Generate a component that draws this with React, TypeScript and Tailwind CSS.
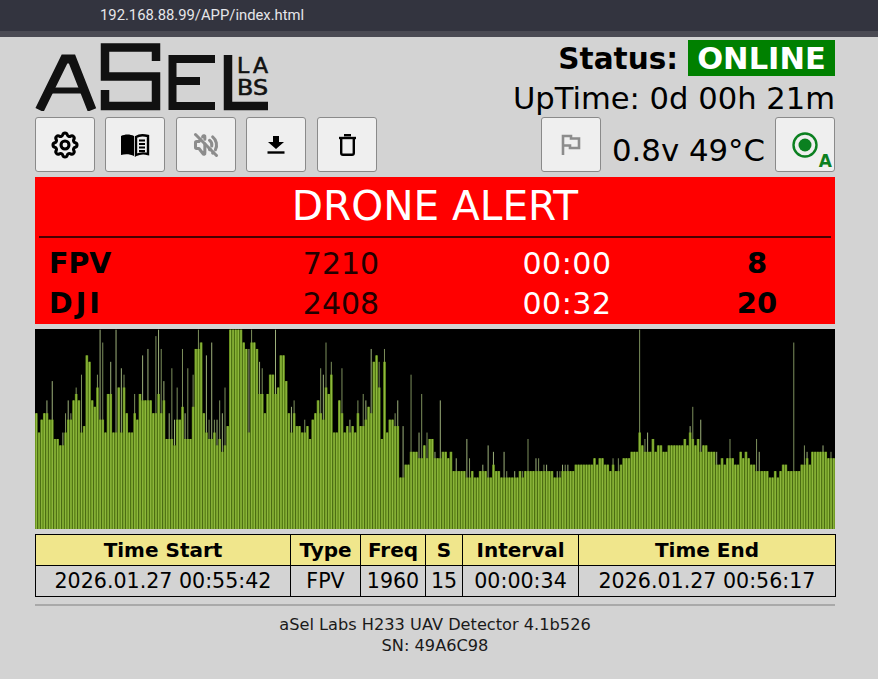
import { TbSettings, TbVolumeOff } from "react-icons/tb";

type B = number | [number, number];
const BARS: B[] = [
  18,15,17,18,[18,20],17,[17,23],14,14,13,[13,15],[15,18],[17,20],[17,18],20,[21,22],20,[15,24],16,27,26,20,19,[22,24],[17,31],[17,29],15,21,[21,26],15,[15,31],22,[15,25],[22,24],18,15,15,[18,21],17,21,[20,27],20,[20,28],20,18,[18,30],[21,31],[18,28],[20,23],14,[14,18],[14,25],[13,17],[17,22],17,[19,28],[14,18],[14,25],14,[19,24],28,[28,31],29,18,[15,27],[14,17],[14,29],[15,17],[13,17],[14,20],[12,18],[13,22],16,31,31,31,31,31,29,28,[15,28],[29,31],29,28,[21,26],[21,25],18,21,24,24,[21,31],22,27,27,23,18,[15,19],[18,20],16,16,
  15,[15,17],16,14,17,18,20,[18,25],[17,24],[22,29],21,[24,26],15,15,20,[18,25],15,16,[15,17],16,15,[18,20],16,[16,21],[17,20],19,[18,28],26,27,[22,26],14,[26,28],15,17,17,[16,18],[16,20],8,[8,16],10,10,[12,24],12,12,[11,15],[11,21],13,[11,15],14,14,[11,12],11,[11,20],12,12,11,12,9,[9,11],9,9,9,[8,14],[8,11],9,8,8,9,[9,10],9,[8,13],8,[10,12],9,9,8,[8,12],[8,9],8,8,[8,9],8,9,[8,9],9,[9,14],9,9,[9,11],[9,11],9,[9,10],[9,10],9,9,8,[8,9],[8,9],[9,10],[9,10],[9,10],9,
  9,10,10,10,10,10,10,10,11,10,11,11,10,10,9,[10,11],9,[9,11],10,11,11,11,12,12,12,[15,31],13,[12,14],[12,15],12,14,12,13,13,12,12,13,13,13,13,13,13,14,13,[15,16],[14,19],13,14,[12,17],13,13,12,12,12,[10,12],10,11,10,11,[11,14],11,10,10,12,11,12,11,10,10,[9,14],[9,12],9,9,9,8,8,9,8,9,10,10,9,9,[9,29],9,9,10,[10,13],[11,12],10,12,12,12,12,[12,13],12,11,[11,12],11,
];

const STEP = 6.43;
const PITCH = 800 / BARS.length;

function Spectrum() {
  return (
    <svg viewBox="0 0 800 200" width="800" height="200" preserveAspectRatio="none" className="block bg-black">
      {BARS.map((b, i) => {
        const fill = Array.isArray(b) ? b[0] : b;
        const spike = Array.isArray(b) ? b[1] : 0;
        const x = i * PITCH;
        const h = Math.min(200, fill * STEP);
        const sh = Math.min(200, spike * STEP);
        return (
          <g key={i}>
            {spike > 0 && <rect x={x + 0.8} y={200 - sh} width={1} height={sh} fill={i % 2 ? "#7c8f5c" : "#9cb07a"} />}
            <rect x={x} y={200 - h} width={PITCH} height={h} fill="#648f1a" />
            <rect x={x + 0.8} y={200 - h} width={1.2} height={h} fill="#8fb83f" />
          </g>
        );
      })}
    </svg>
  );
}

function Logo() {
  return (
    <svg width="234" height="68" viewBox="0 0 234 68" className="block" role="img" aria-label="aSel Labs logo">
      <g fill="none" stroke="#111" strokeLinejoin="miter">
        <path d="M4.5 67 L29.5 16 L37 16 L57 67" strokeWidth="9" />
        <path d="M16 47.5 H47" strokeWidth="6" />
        <path d="M121 18 V4.5 H70 V33.5 H121 V63 H70 V47" strokeWidth="8.5" />
        <path d="M180 16 H137.5 V63 H180" strokeWidth="8" />
        <path d="M137 38 H165" strokeWidth="8" />
        <path d="M193 12 V63 H233" strokeWidth="8.5" />
      </g>
      <text x="202" y="30" fill="#111" stroke="#111" strokeWidth="0.6" fontFamily="'DejaVu Sans', sans-serif" fontSize="22" textLength="31" lengthAdjust="spacing">LA</text>
      <text x="202" y="52" fill="#111" stroke="#111" strokeWidth="0.6" fontFamily="'DejaVu Sans', sans-serif" fontSize="22" textLength="31" lengthAdjust="spacingAndGlyphs">BS</text>
    </svg>
  );
}

function IconBtn({ children }: { children: React.ReactNode }) {
  return (
    <button className="relative flex h-[55px] w-[60px] shrink-0 items-center justify-center rounded-[3px] border border-[#8a8a8a] bg-[#efefef]">
      {children}
    </button>
  );
}

const Book = () => (
  <svg width="30" height="24" viewBox="0 0 30 24">
    <path d="M1 3 C5 1 10 1 14 3 V23 C10 21 5 21 1 22 Z" fill="#000" />
    <path d="M16 4 C19 2 24 2 28 3 V21 C24 20 20 20 16 22 Z" fill="none" stroke="#000" strokeWidth="2.4" />
    <path d="M19 7.5 H25 M19 11 H25 M19 14.5 H25 M19 18 H25" stroke="#000" strokeWidth="1.8" />
  </svg>
);

const Download = () => (
  <svg width="18" height="18" viewBox="0 0 18 18">
    <path d="M6 0 H12 V6 H17 L9 13 L1 6 H6 Z" fill="#000" />
    <path d="M0.5 16.5 H17.5" stroke="#000" strokeWidth="2.4" />
  </svg>
);

const Trash = () => (
  <svg width="19" height="22" viewBox="0 0 19 22">
    <path d="M1 4 H18" stroke="#000" strokeWidth="2.4" />
    <path d="M6 1.2 H13" stroke="#000" strokeWidth="2.4" />
    <path d="M3.2 4 V19 Q3.2 20.8 5 20.8 H14 Q15.8 20.8 15.8 19 V4" fill="none" stroke="#000" strokeWidth="2.4" />
  </svg>
);

const Flag = () => (
  <svg width="20" height="22" viewBox="0 0 20 22">
    <path d="M2 21 V2 H10 V4.5 H18 V14 H9 V11.5 H2" fill="none" stroke="#8c8c8c" strokeWidth="2.6" />
  </svg>
);

const Radio = () => (
  <svg width="26" height="26" viewBox="0 0 26 26">
    <circle cx="13" cy="13" r="11.5" fill="none" stroke="#0b8020" strokeWidth="2.4" />
    <circle cx="13" cy="13" r="6.5" fill="#0b8020" />
  </svg>
);

export default function App() {
  return (
    <div className="min-h-screen bg-[#d3d3d3] font-['DejaVu_Sans',sans-serif] text-black">
      <div className="h-[31px] bg-[#33343f] pl-[100px] pt-[6px] font-['Roboto',sans-serif] text-[14.8px] leading-[18px] text-[#e6e6ea]">
        192.168.88.99/APP/index.html
      </div>
      <div className="h-[6px] bg-[#4a4a53]" />
      <div className="mx-[35px] w-[800px]">
        <div className="flex h-[140px] justify-between">
          <div className="flex flex-col">
            <div className="mt-[6px]">
              <Logo />
            </div>
            <div className="mt-[6px] flex">
              <IconBtn><TbSettings size={32} color="#000" strokeWidth={2.3} /></IconBtn>
              <div className="ml-[10px]"><IconBtn><Book /></IconBtn></div>
              <div className="ml-[11px]"><IconBtn><TbVolumeOff size={28} color="#8c8c8c" strokeWidth={2.6} /></IconBtn></div>
              <div className="ml-[10px]"><IconBtn><Download /></IconBtn></div>
              <div className="ml-[11px]"><IconBtn><Trash /></IconBtn></div>
            </div>
          </div>
          <div className="flex flex-col items-end pt-[3px]">
            <div className="flex h-[36px] items-center">
              <span className="pt-[4px] text-[29.5px] font-bold leading-none">Status:</span>
              <span className="ml-[10px] flex h-[36px] w-[147px] items-center justify-center bg-[#008000] pt-[3px] text-[30.5px] font-bold leading-none text-white">ONLINE</span>
            </div>
            <div className="mt-[4px] h-[37px] text-[30.6px] leading-[37px] whitespace-nowrap">UpTime: 0d 00h 21m</div>
            <div className="flex items-center">
              <IconBtn><Flag /></IconBtn>
              <span className="ml-[11px] mr-[10px] whitespace-nowrap pt-[10px] text-[30.8px] leading-[40px]">0.8v 49°C</span>
              <IconBtn>
                <Radio />
                <span className="absolute bottom-[1px] right-[2px] text-[17px] font-bold leading-none text-[#0b8020]">A</span>
              </IconBtn>
            </div>
          </div>
        </div>

        <div className="h-[147px] bg-[#ff0000]">
          <div className="h-[59px] text-center text-[40.6px] leading-[58px] text-white">DRONE ALERT</div>
          <div className="mx-[4px] h-[2px] bg-[#4a0000]" />
          <div className="mt-[6px] grid grid-cols-[192px_228px_224px_156px] text-[30px] leading-[40px]">
            <span className="pl-[14px] text-[28.5px] font-bold">FPV</span>
            <span className="text-center text-[#220000]">7210</span>
            <span className="text-center tracking-[0.5px] text-white">00:00</span>
            <span className="text-center text-[29px] leading-[38px] font-bold">8</span>
            <span className="pl-[14px] text-[28.5px] font-bold tracking-[3px]">DJI</span>
            <span className="text-center text-[#220000]">2408</span>
            <span className="text-center tracking-[0.5px] text-white">00:32</span>
            <span className="text-center text-[29px] leading-[38px] font-bold">20</span>
          </div>
        </div>

        <div className="mt-[5px]">
          <Spectrum />
        </div>

        <table className="mt-[5px] w-[800px] table-fixed border-collapse text-center text-[20px] leading-[30px]">
          <colgroup>
            <col className="w-[255px]" />
            <col className="w-[70px]" />
            <col className="w-[65px]" />
            <col className="w-[37px]" />
            <col className="w-[116px]" />
            <col className="w-[257px]" />
          </colgroup>
          <thead>
            <tr className="bg-[#f0e68c] font-bold">
              {["Time Start", "Type", "Freq", "S", "Interval", "Time End"].map((t) => (
                <th key={t} className="border border-black p-0 font-bold whitespace-nowrap">{t}</th>
              ))}
            </tr>
          </thead>
          <tbody className="text-[20.6px]">
            <tr>
              {["2026.01.27 00:55:42", "FPV", "1960", "15", "00:00:34", "2026.01.27 00:56:17"].map((t) => (
                <td key={t} className="border border-black p-0 whitespace-nowrap">{t}</td>
              ))}
            </tr>
          </tbody>
        </table>

        <div className="mt-[7px] h-[2px] bg-[#a9a9a9]" />
        <div className="mt-[9px] text-center text-[16.2px] leading-[20.5px] text-[#1a1a1a]">
          <div>aSel Labs H233 UAV Detector 4.1b526</div>
          <div>SN: 49A6C98</div>
        </div>
      </div>
    </div>
  );
}
